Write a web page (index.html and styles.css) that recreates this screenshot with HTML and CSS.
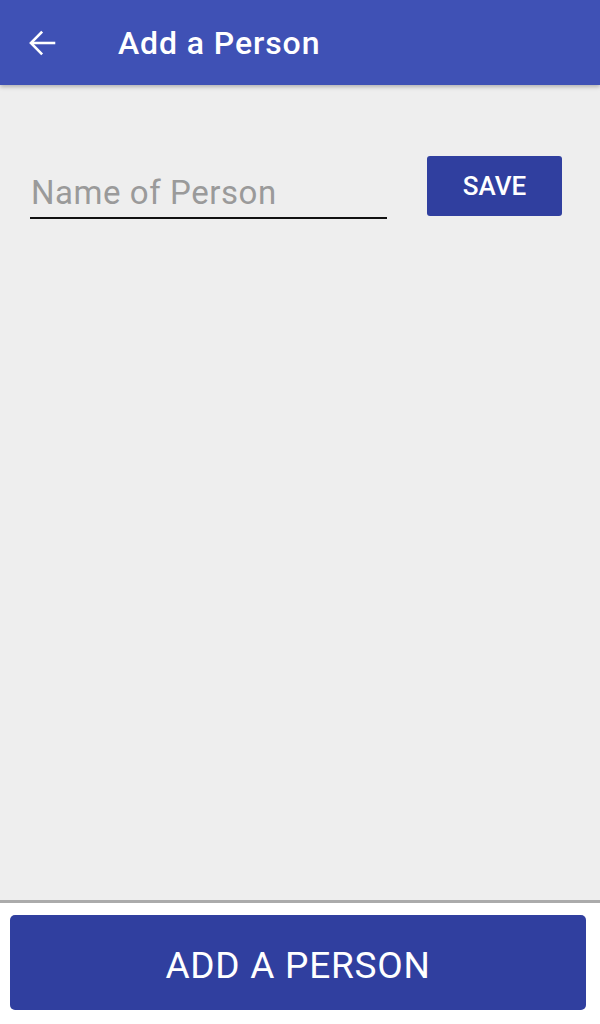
FILE: index.html
```html
<!DOCTYPE html>
<html>
<head>
    <link rel="stylesheet" href="styles.css">
</head>
<body>
  <div class="screen">
    <header class="toolbar">
      <button type="button" class="back" aria-label="Back">
        <svg width="36" height="36" viewBox="0 0 24 24" fill="none" xmlns="http://www.w3.org/2000/svg">
          <path d="M20 12H5.5" stroke="white" stroke-width="1.7" stroke-linecap="square"/>
          <path d="M11.5 5L4.6 12L11.5 19" stroke="white" stroke-width="1.7" stroke-linecap="square"/>
        </svg>
      </button>
      <h1 class="title">Add a Person</h1>
    </header>

    <main class="content">
      <form class="add-row" id="personForm">
        <input type="text" class="name-input" id="personName" placeholder="Name of Person">
        <button type="submit" class="save-btn">SAVE</button>
      </form>
    </main>

    <footer class="footer">
      <button type="button" class="add-btn">ADD A PERSON</button>
    </footer>
  </div>
</body>
</html>
```

FILE: styles.css
```css
html, body {
    margin: 0;
    height: 100%;
}

body {
    font-family: Roboto, "Noto Sans", sans-serif;
    background: #fff;
}

.screen {
    display: flex;
    flex-direction: column;
    height: 1024px;
}

.toolbar {
    position: relative;
    z-index: 1;
    display: flex;
    align-items: center;
    height: 85px;
    background-color: #3F51B5;
    box-shadow: 0 2px 4px rgba(0, 0, 0, 0.25);
}

.back {
    display: flex;
    padding: 0;
    margin: 0 0 0 24px;
    border: none;
    background: none;
}

.title {
    margin: 0 0 0 58px;
    color: #fff;
    font-size: 32px;
    font-weight: 500;
    letter-spacing: 0.9px;
    line-height: 36px;
}

.content {
    flex: 1;
    background-color: #EEEEEE;
    border-bottom: 3px solid #ABABAB;
    padding: 71px 38px 0 30px;
}

.add-row {
    display: flex;
    align-items: flex-start;
    gap: 40px;
}

.name-input {
    box-sizing: border-box;
    width: 357px;
    height: 46px;
    margin-top: 17px;
    padding: 0 0 6px 1px;
    border: none;
    border-bottom: 2px solid #111;
    background: transparent;
    font-family: Roboto, sans-serif;
    font-size: 33px;
    letter-spacing: 0.55px;
    line-height: 38px;
    color: #222;
    outline: none;
}

.name-input::placeholder {
    color: #9A9A9A;
}

.save-btn {
    width: 135px;
    height: 60px;
    border: none;
    border-radius: 3px;
    background-color: #303F9F;
    color: #fff;
    font-family: Roboto, sans-serif;
    font-size: 26px;
    font-weight: 500;
    padding: 0;
}

.footer {
    padding: 12px 14px 14px 10px;
    background: #fff;
}

.add-btn {
    display: block;
    width: 100%;
    height: 95px;
    border: none;
    border-radius: 5px;
    background-color: #303F9F;
    color: #fff;
    font-family: Roboto, sans-serif;
    font-size: 37px;
    letter-spacing: 0.75px;
    padding: 6px 0 0;
}
```
